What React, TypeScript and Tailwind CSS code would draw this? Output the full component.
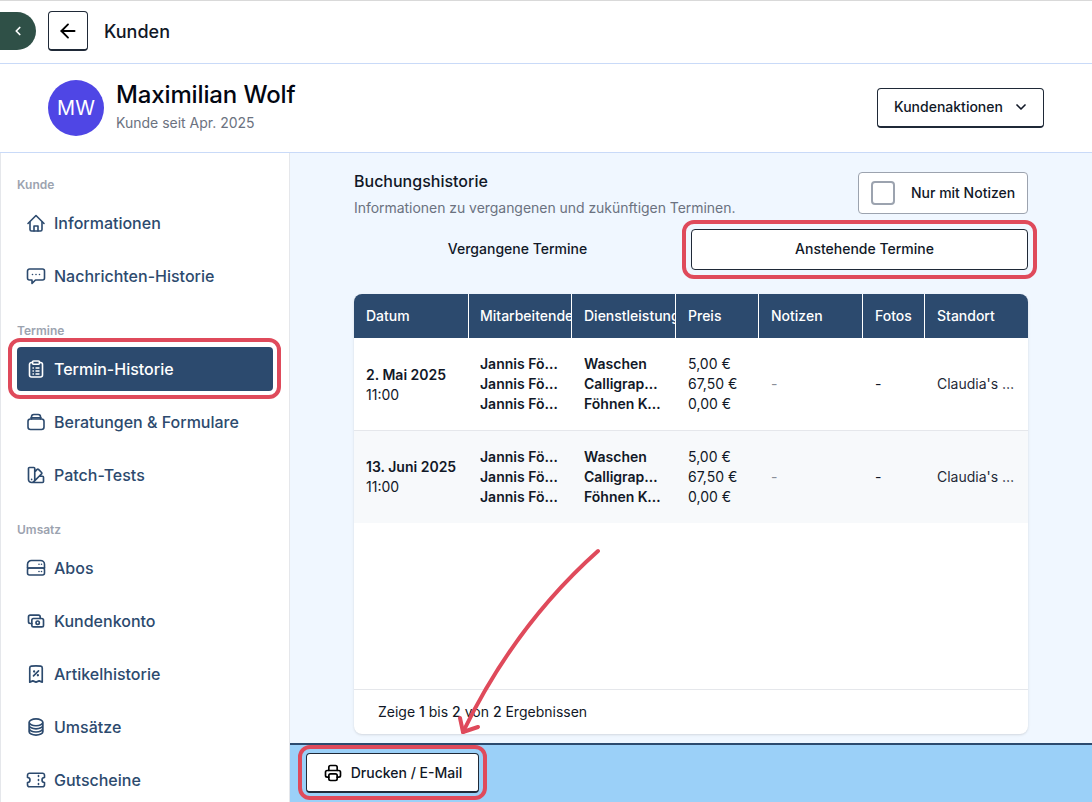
import React from "react";
import { ArrowLeft, ChevronDown, ChevronLeft } from "lucide-react";
import { HiOutlineSwatch, HiOutlineReceiptPercent, HiOutlineCircleStack } from "react-icons/hi2";
import { TbCash, TbPrinter } from "react-icons/tb";

type IconProps = { className?: string };
type IconT = React.ComponentType<IconProps>;

function Svg({ className, children }: IconProps & { children: React.ReactNode }) {
  return (
    <svg className={className} viewBox="0 0 20 20" fill="none" stroke="currentColor" strokeWidth="1.6" strokeLinecap="round" strokeLinejoin="round">
      {children}
    </svg>
  );
}

const HomeIcon: IconT = (p) => (
  <Svg {...p}>
    <path d="M2 10.5 10 2.5l8 8" />
    <path d="M4 9v7.5a1.5 1.5 0 0 0 1.5 1.5h9a1.5 1.5 0 0 0 1.5-1.5V9" />
    <path d="M8 18v-5h4v5" />
  </Svg>
);
const ChatIcon: IconT = (p) => (
  <Svg {...p}>
    <path d="M3.5 3h13a2 2 0 0 1 2 2v7a2 2 0 0 1-2 2H9.5L6 17.5V14H3.5a2 2 0 0 1-2-2V5a2 2 0 0 1 2-2z" />
    <path d="M6.5 8.5h.01M10 8.5h.01M13.5 8.5h.01" />
  </Svg>
);
const ClipIcon: IconT = (p) => (
  <Svg {...p}>
    <path d="M6.5 3.5H5.5a2 2 0 0 0-2 2V16a2 2 0 0 0 2 2h9a2 2 0 0 0 2-2V5.5a2 2 0 0 0-2-2h-1" />
    <rect x="6.5" y="2" width="7" height="3.2" rx="1" />
    <path d="M7 9h.4M10 9h3M7 12h.4M10 12h3M7 15h.4M10 15h3" strokeWidth="1.4" />
  </Svg>
);
const InboxIcon: IconT = (p) => (
  <Svg {...p}>
    <path d="M5.5 7V4.8a2.3 2.3 0 0 1 2.3-2.3h4.4a2.3 2.3 0 0 1 2.3 2.3V7" />
    <path d="M5 5.8h10" />
    <rect x="2" y="7" width="16" height="10.5" rx="2.5" />
  </Svg>
);
const ServerIcon: IconT = (p) => (
  <Svg {...p}>
    <path d="M1.5 10V6.5a4 4 0 0 1 4-4h9a4 4 0 0 1 4 4V10" />
    <rect x="1.5" y="10" width="17" height="7" rx="2" />
    <path d="M1.5 10h17M13 6.2h.01M15.5 6.2h.01M13 13.5h.01M15.5 13.5h.01" />
  </Svg>
);
const TicketIcon: IconT = (p) => (
  <Svg {...p}>
    <path d="M3.5 3.2h13a2 2 0 0 1 2 2v2.3a2.5 2.5 0 0 0 0 5v2.3a2 2 0 0 1-2 2h-13a2 2 0 0 1-2-2v-2.3a2.5 2.5 0 0 0 0-5V5.2a2 2 0 0 1 2-2z" />
    <path d="M12.5 5.5v1M12.5 9.5v1M12.5 13.5v1" />
  </Svg>
);
const SwatchIcon: IconT = (p) => <HiOutlineSwatch {...p} strokeWidth={2} />;
const ReceiptIcon: IconT = (p) => <HiOutlineReceiptPercent {...p} strokeWidth={2} />;
const DbIcon: IconT = (p) => <HiOutlineCircleStack {...p} strokeWidth={2} />;

function NavItem({ icon: Icon, label, active }: { icon: IconT; label: string; active?: boolean }) {
  return (
    <div
      className={
        active
          ? "flex h-11 items-center gap-2 rounded-[4px] bg-[#2c4a6e] pl-[9px] text-[16px] font-medium text-white"
          : "flex h-11 items-center gap-2 rounded-[4px] pl-[9px] text-[16px] font-medium text-[#2c4a6e]"
      }
    >
      <Icon className="h-5 w-5 shrink-0" />
      <span>{label}</span>
    </div>
  );
}

function NavGroup({ title, children }: { title: string; children: React.ReactNode }) {
  return (
    <div className="flex flex-col gap-[9px]">
      <div className="-mb-px h-4 text-[12px] leading-4 font-semibold text-[#9ca3af]">{title}</div>
      {children}
    </div>
  );
}

const cols = "grid grid-cols-[115px_103px_104px_83px_104px_62px_103px]";

function Row({ date, alt }: { date: string; alt?: boolean }) {
  return (
    <div className={`${cols} items-center text-[14px] leading-5 text-[#111827] ${alt ? "h-[92px] bg-[#f7f9fb] pb-px" : "h-[93px] border-b border-[#e5e7eb] bg-white"}`}>
      <div className="mt-px pl-3">
        <div className="font-semibold">{date}</div>
        <div>11:00</div>
      </div>
      <div className="pl-[11px] pr-3 font-semibold">
        <div className="truncate">Jannis Föhner</div>
        <div className="truncate">Jannis Föhner</div>
        <div className="truncate">Jannis Föhner</div>
      </div>
      <div className="px-3 font-semibold">
        <div className="truncate">Waschen</div>
        <div className="truncate">Calligraphy Cut</div>
        <div className="truncate">Föhnen Kurz</div>
      </div>
      <div className="pl-3">
        <div>5,00 €</div>
        <div>67,50 €</div>
        <div>0,00 €</div>
      </div>
      <div className="pl-3 text-[#8a8f98]">-</div>
      <div className="pl-3">-</div>
      <div className="truncate px-3 text-[#1f2937]">Claudia's Salon</div>
    </div>
  );
}

export default function App() {
  const heads = ["Datum", "Mitarbeitende", "Dienstleistung", "Preis", "Notizen", "Fotos", "Standort"];
  return (
    <div
      className="relative flex h-[802px] w-[1092px] flex-col overflow-hidden bg-white text-[#111827]"
      style={{ fontFamily: "Inter, 'Liberation Sans', sans-serif" }}
    >
      <header className="flex h-16 shrink-0 items-center gap-3 border-t border-b border-t-[#d9d9d9] border-b-[#c9daf8] pb-[2px]">
        <div className="flex h-[38px] w-9 items-center justify-end rounded-r-full bg-[#2f5047] pr-[11px] text-white">
          <ChevronLeft className="h-3.5 w-3.5" strokeWidth={3} />
        </div>
        <button className="flex h-10 w-10 items-center justify-center rounded-[4px] border border-b-2 border-[#1f2937] bg-white">
          <ArrowLeft className="h-[18px] w-[18px] scale-125 text-black" strokeWidth={2} />
        </button>
        <div className="ml-1 text-[18px] font-medium text-[#111827]">Kunden</div>
      </header>

      <section className="flex h-[89px] shrink-0 items-center justify-between border-b border-[#c9daf8] pl-12 pr-12">
        <div className="flex items-center gap-3">
          <div className="flex h-14 w-14 items-center justify-center rounded-full bg-[#4f46e5] text-[20px] text-white">MW</div>
          <div className="pb-[4px]">
            <div className="text-[24px] leading-8 font-medium tracking-[-0.13px] text-[#030712]">Maximilian Wolf</div>
            <div className="mt-[2px] text-[14px] leading-5 text-[#6b7280]">Kunde seit Apr. 2025</div>
          </div>
        </div>
        <button className="flex h-10 w-[167px] items-center justify-center gap-[10px] rounded-[4px] border border-b-2 border-[#1f2937] bg-white pb-[2px] pl-[2px] text-[14px] font-medium text-[#111827]">
          Kundenaktionen
          <ChevronDown className="h-4 w-4" strokeWidth={2.5} />
        </button>
      </section>

      <div className="flex min-h-0 flex-1">
        <aside className="flex w-[290px] shrink-0 flex-col gap-[25px] overflow-hidden border-x border-x-[#e5e7eb] bg-white px-4 pt-6">
          <NavGroup title="Kunde">
            <NavItem icon={HomeIcon} label="Informationen" />
            <NavItem icon={ChatIcon} label="Nachrichten-Historie" />
          </NavGroup>
          <NavGroup title="Termine">
            <NavItem icon={ClipIcon} label="Termin-Historie" active />
            <NavItem icon={InboxIcon} label="Beratungen & Formulare" />
            <NavItem icon={SwatchIcon} label="Patch-Tests" />
          </NavGroup>
          <NavGroup title="Umsatz">
            <NavItem icon={ServerIcon} label="Abos" />
            <NavItem icon={TbCash} label="Kundenkonto" />
            <NavItem icon={ReceiptIcon} label="Artikelhistorie" />
            <NavItem icon={DbIcon} label="Umsätze" />
            <NavItem icon={TicketIcon} label="Gutscheine" />
          </NavGroup>
        </aside>

        <main className="flex min-w-0 flex-1 flex-col bg-[#f0f7ff]">
          <div className="flex min-h-0 flex-1 flex-col px-16 pt-[19px] pb-[9px]">
            <div className="flex h-[42px] items-start justify-between">
              <div className="-mt-px">
                <div className="text-[16px] leading-5 font-medium text-[#111827]">Buchungshistorie</div>
                <div className="mt-[7px] text-[14px] leading-5 tracking-[-0.04px] text-[#6b7280]">Informationen zu vergangenen und zukünftigen Terminen.</div>
              </div>
              <label className="flex h-[42px] w-[170px] items-center rounded-[4px] border border-[#9ca3af] bg-white pb-[2px] pl-[12px] text-[14px] font-medium">
                <span className="mt-[2px] h-6 w-6 rounded-[4px] border-2 border-[#9ca3af] bg-white" />
                <span className="ml-4">Nur mit Notizen</span>
              </label>
            </div>

            <div className="mt-[15px] grid grid-cols-[327px_337px] gap-[10px]">
              <button className="flex h-[41px] items-center justify-center pb-[2px] text-[14px] font-medium">Vergangene Termine</button>
              <button className="flex h-[41px] items-center justify-center rounded-[4px] border border-[#1f2937] bg-white pb-[2px] pl-[10px] text-[14px] font-medium">Anstehende Termine</button>
            </div>

            <div className="mt-6 flex min-h-0 flex-1 flex-col overflow-hidden rounded-lg bg-white shadow-sm">
              <div className={`${cols} h-11 bg-[#2c4a6e] text-[14px] font-medium text-white`}>
                {heads.map((h, i) => (
                  <div key={h} className={`flex items-center overflow-hidden whitespace-nowrap pb-[2px] ${i === 1 ? "pl-[11px]" : "pl-3"} ${i < 6 ? "border-r border-white" : ""}`}>
                    {h}
                  </div>
                ))}
              </div>
              <Row date="2. Mai 2025" />
              <Row date="13. Juni 2025" alt />
              <div className="flex-1" />
              <div className="flex h-[45px] items-center border-t border-[#e5e7eb] pb-[2px] pl-6 text-[14px] text-[#111827]">
                <span>
                  Zeige <span className="font-medium">1</span> bis <span className="font-medium">2</span> von <span className="font-medium">2</span> Ergebnissen
                </span>
              </div>
            </div>
          </div>

          <div className="flex h-[59px] shrink-0 items-start border-t-2 border-[#2c4a6e] bg-[#9bd0f8] pl-4 pt-2">
            <button className="flex h-10 w-[173px] items-center justify-center gap-2 rounded-[4px] border border-b-2 border-[#1f2937] bg-white text-[14px] font-medium">
              <TbPrinter className="h-5 w-5 text-black" />
              Drucken / E-Mail
            </button>
          </div>
        </main>
      </div>

      <div className="pointer-events-none absolute left-[8px] top-[338px] h-[61px] w-[273px] rounded-[12px] border-4 border-[#df4a5b]" />
      <div className="pointer-events-none absolute left-[682px] top-[220px] h-[59px] w-[355px] rounded-[12px] border-4 border-[#df4a5b]" />
      <div className="pointer-events-none absolute left-[298px] top-[745px] h-[55px] w-[189px] rounded-[12px] border-4 border-[#df4a5b]" />
      <svg className="pointer-events-none absolute left-0 top-0" width="1092" height="802" fill="none" stroke="#df4a5b" strokeWidth="4" strokeLinecap="round" strokeLinejoin="round">
        <path d="M598 551 Q515 625 463 732" />
        <path d="M460 718 L463 732 L478 727" />
      </svg>
    </div>
  );
}
